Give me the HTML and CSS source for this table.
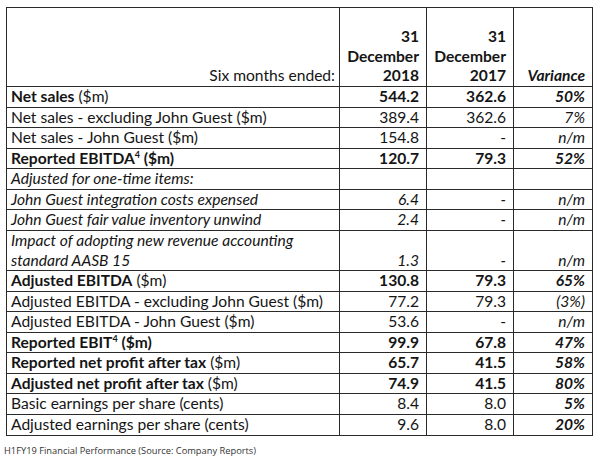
FILE: index.html
```html
<!DOCTYPE html>
<html>
<head>
<meta charset="utf-8">
<link rel="stylesheet" href="styles.css">
</head>
<body>
<table class="fin">
  <colgroup>
    <col class="c-label"><col class="c-num"><col class="c-num"><col class="c-var">
  </colgroup>
  <thead>
    <tr class="head">
      <th class="label">Six months ended:</th>
      <th class="num b">31<br>December<br>2018</th>
      <th class="num b">31<br>December<br>2017</th>
      <th class="num b i">Variance</th>
    </tr>
  </thead>
  <tbody>
    <tr><td class="label"><b>Net sales</b> ($m)</td><td class="num b">544.2</td><td class="num b">362.6</td><td class="num b i">50%</td></tr>
    <tr><td class="label">Net sales - excluding John Guest ($m)</td><td class="num">389.4</td><td class="num">362.6</td><td class="num i">7%</td></tr>
    <tr><td class="label">Net sales - John Guest ($m)</td><td class="num">154.8</td><td class="num">-</td><td class="num i">n/m</td></tr>
    <tr><td class="label b">Reported EBITDA<sup>4</sup> ($m)</td><td class="num b">120.7</td><td class="num b">79.3</td><td class="num b i">52%</td></tr>
    <tr class="it"><td class="label">Adjusted for one-time items:</td><td class="num"></td><td class="num"></td><td class="num"></td></tr>
    <tr class="it"><td class="label">John Guest integration costs expensed</td><td class="num">6.4</td><td class="num">-</td><td class="num">n/m</td></tr>
    <tr class="it"><td class="label">John Guest fair value inventory unwind</td><td class="num">2.4</td><td class="num">-</td><td class="num">n/m</td></tr>
    <tr class="it"><td class="label">Impact of adopting new revenue accounting<br>standard AASB 15</td><td class="num">1.3</td><td class="num">-</td><td class="num">n/m</td></tr>
    <tr><td class="label"><b>Adjusted EBITDA</b> ($m)</td><td class="num b">130.8</td><td class="num b">79.3</td><td class="num b i">65%</td></tr>
    <tr><td class="label">Adjusted EBITDA - excluding John Guest ($m)</td><td class="num">77.2</td><td class="num">79.3</td><td class="num i">(3%)</td></tr>
    <tr><td class="label">Adjusted EBITDA - John Guest ($m)</td><td class="num">53.6</td><td class="num">-</td><td class="num i">n/m</td></tr>
    <tr><td class="label b">Reported EBIT<sup>4</sup> ($m)</td><td class="num b">99.9</td><td class="num b">67.8</td><td class="num b i">47%</td></tr>
    <tr><td class="label"><b>Reported net profit after tax</b> ($m)</td><td class="num b">65.7</td><td class="num b">41.5</td><td class="num b i">58%</td></tr>
    <tr><td class="label"><b>Adjusted net profit after tax</b> ($m)</td><td class="num b">74.9</td><td class="num b">41.5</td><td class="num b i">80%</td></tr>
    <tr><td class="label">Basic earnings per share (cents)</td><td class="num">8.4</td><td class="num">8.0</td><td class="num b i">5%</td></tr>
    <tr><td class="label">Adjusted earnings per share (cents)</td><td class="num">9.6</td><td class="num">8.0</td><td class="num b i">20%</td></tr>
  </tbody>
</table>
<p class="caption">H1FY19 Financial Performance (Source: Company Reports)</p>
</body>
</html>
```
FILE: styles.css
```css
html, body {
  margin: 0;
  padding: 0;
  background: #ffffff;
}
body {
  padding: 7px 0 0 6px;
  font-family: "Lato", "Open Sans", sans-serif;
  color: #151515;
}
.fin {
  border-collapse: collapse;
  table-layout: fixed;
  width: 586px;
  font-size: 15.6px;
  line-height: 19.56px;
}
.c-label { width: 333px; }
.c-num { width: 87px; }
.c-var { width: 79px; }
.fin th, .fin td {
  border: 1px solid #2a2a2a;
  padding: 0 7px 0 4px;
  vertical-align: bottom;
  font-weight: 400;
  white-space: nowrap;
}
.fin .label {
  text-align: left;
  padding-right: 4px;
}
.fin th.label { text-align: right; }
.fin .num { text-align: right; }
.fin .head th { height: 78px; }
.fin .b, .fin b { font-weight: 700; }
.fin .i { font-style: italic; }
.fin .it td { font-style: italic; }
sup {
  font-size: 9px;
  line-height: 0;
  vertical-align: 6px;
}
.caption {
  margin: 9px 0 0 -2px;
  font-family: "Open Sans", sans-serif;
  font-size: 9.3px;
  line-height: 12px;
  color: #333333;
}
```
